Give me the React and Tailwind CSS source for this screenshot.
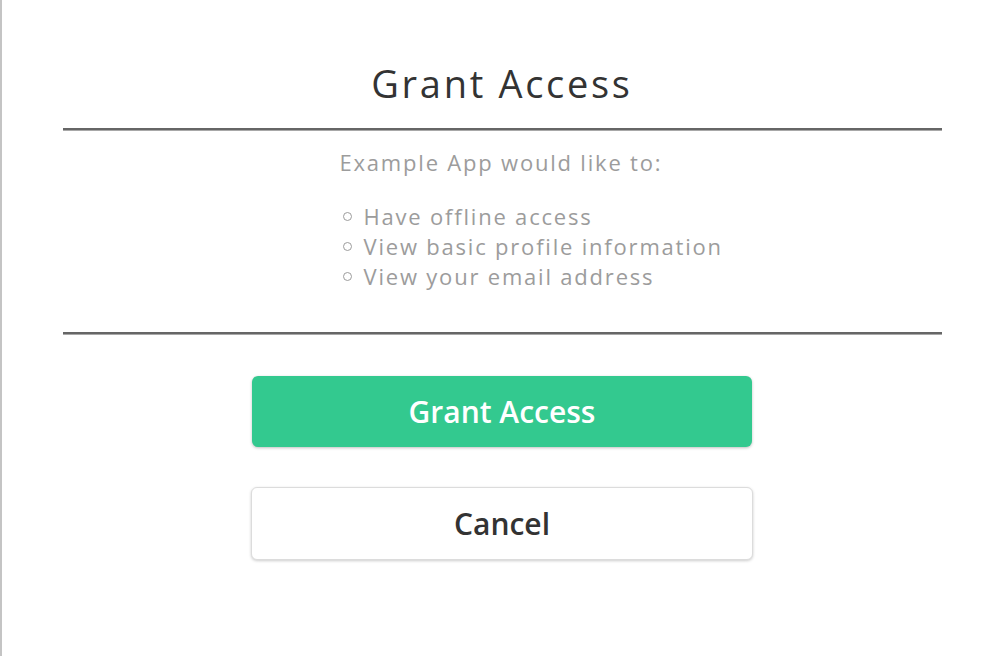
export default function App() {
  return (
    <div
      className="w-[1002px] h-[656px] bg-white border-l-2 border-[#c4c4c4] flex flex-col items-center"
      style={{ fontFamily: '"Open Sans", "Noto Sans", sans-serif' }}
    >
      <h1 className="mt-[59px] text-[38px] leading-[48px] tracking-[2.7px] text-[#333] font-normal">Grant Access</h1>
      <div className="mt-[21px] w-[879px] border-t-2 border-b border-t-[#666] border-b-[#a8a8a8]" />
      <div className="w-[879px] pl-[277px] pt-[16px] text-[#9c9c9c] text-[22px] leading-[30px] tracking-[1.8px]">
        <p>Example App would like to:</p>
        <ul className="mt-[24px]">
          {["Have offline access", "View basic profile information", "View your email address"].map((t) => (
            <li key={t} className="flex items-center">
              <span className="ml-[3px] mr-[12px] w-[9px] h-[9px] rounded-full border border-[#9c9c9c] shrink-0" />
              {t}
            </li>
          ))}
        </ul>
      </div>
      <div className="mt-[41px] w-[879px] border-t-2 border-b border-t-[#666] border-b-[#a8a8a8]" />
      <button className="mt-[41px] w-[500px] h-[71px] rounded-[6px] bg-[#33c98f] text-white text-[30px] font-semibold shadow-[0_1px_3px_rgba(0,0,0,0.25)]">
        Grant Access
      </button>
      <button className="mt-[40px] w-[502px] h-[73px] rounded-[6px] bg-white border border-[#dcdcdc] text-[#333] text-[30px] font-semibold shadow-[0_1px_3px_rgba(0,0,0,0.2)]">
        Cancel
      </button>
    </div>
  );
}
